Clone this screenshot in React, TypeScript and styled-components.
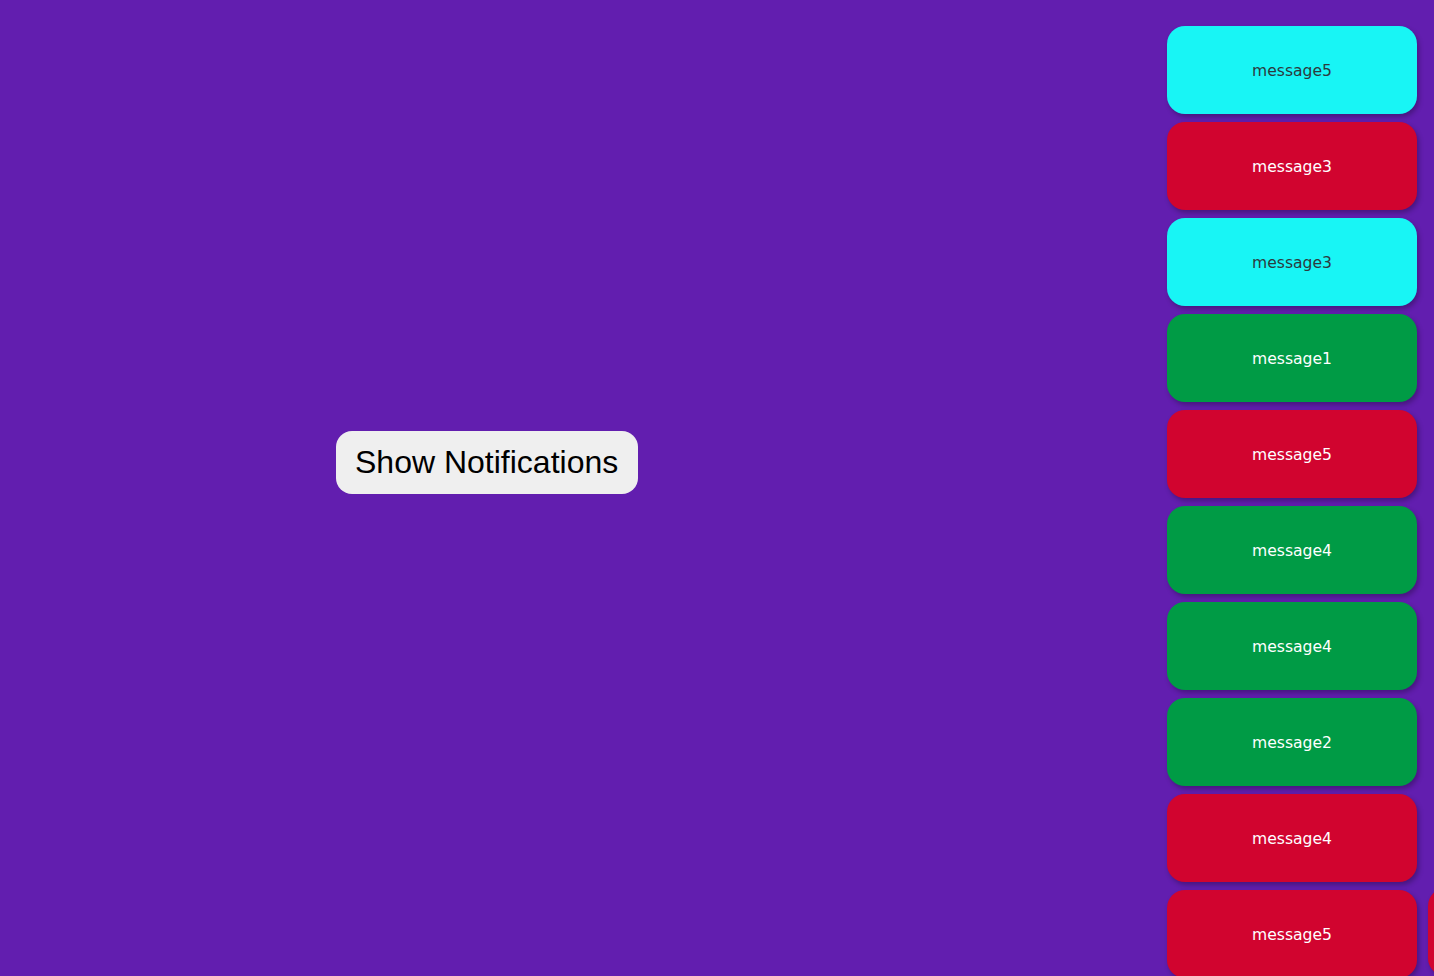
import React from "react";
import styled, { createGlobalStyle } from "styled-components";

const Global = createGlobalStyle`
  html, body { margin: 0; padding: 0; height: 100%; overflow: hidden; }
  body { background: #621eaf; font-family: "DejaVu Sans", Verdana, sans-serif; }
`;

const Page = styled.div`
  position: relative;
  display: flex;
  width: 100vw;
  height: 100vh;
  overflow: hidden;
`;

const Main = styled.main`
  flex: 1;
  padding: 431px 0 0 336px;
`;

const ShowButton = styled.button`
  font-family: "Liberation Sans", Arial, sans-serif;
  font-size: 32px;
  line-height: 37px;
  padding: 13px 20px 13px 19px;
  border: none;
  border-radius: 16px;
  background: #efefef;
  color: #000;
  cursor: pointer;
`;

const Stack = styled.aside`
  display: flex;
  flex-direction: column;
  gap: 8px;
  padding: 26px 17px 0 0;
`;

const palette = {
  cyan: { bg: "#18f5f5", fg: "#2c3a3e" },
  red: { bg: "#d1042f", fg: "#ffffff" },
  green: { bg: "#009b45", fg: "#ffffff" },
};

type Kind = keyof typeof palette;

const Toast = styled.div<{ $kind: Kind }>`
  flex: none;
  width: 250px;
  height: 88px;
  box-sizing: border-box;
  padding-top: 2px;
  display: flex;
  align-items: center;
  justify-content: center;
  border-radius: 18px;
  background: ${(p) => palette[p.$kind].bg};
  color: ${(p) => palette[p.$kind].fg};
  font-size: 15.6px;
  box-shadow: 2px 3px 5px rgba(0, 0, 0, 0.28);
`;

const Incoming = styled(Toast)`
  position: absolute;
  left: 1428px;
  top: 888px;
`;

const items: { kind: Kind; text: string }[] = [
  { kind: "cyan", text: "message5" },
  { kind: "red", text: "message3" },
  { kind: "cyan", text: "message3" },
  { kind: "green", text: "message1" },
  { kind: "red", text: "message5" },
  { kind: "green", text: "message4" },
  { kind: "green", text: "message4" },
  { kind: "green", text: "message2" },
  { kind: "red", text: "message4" },
  { kind: "red", text: "message5" },
];

export default function App() {
  return (
    <Page>
      <Global />
      <Main>
        <ShowButton>Show Notifications</ShowButton>
      </Main>
      <Stack>
        {items.map((it, i) => (
          <Toast key={i} $kind={it.kind}>
            {it.text}
          </Toast>
        ))}
      </Stack>
      <Incoming $kind="red" aria-hidden="true" />
    </Page>
  );
}
